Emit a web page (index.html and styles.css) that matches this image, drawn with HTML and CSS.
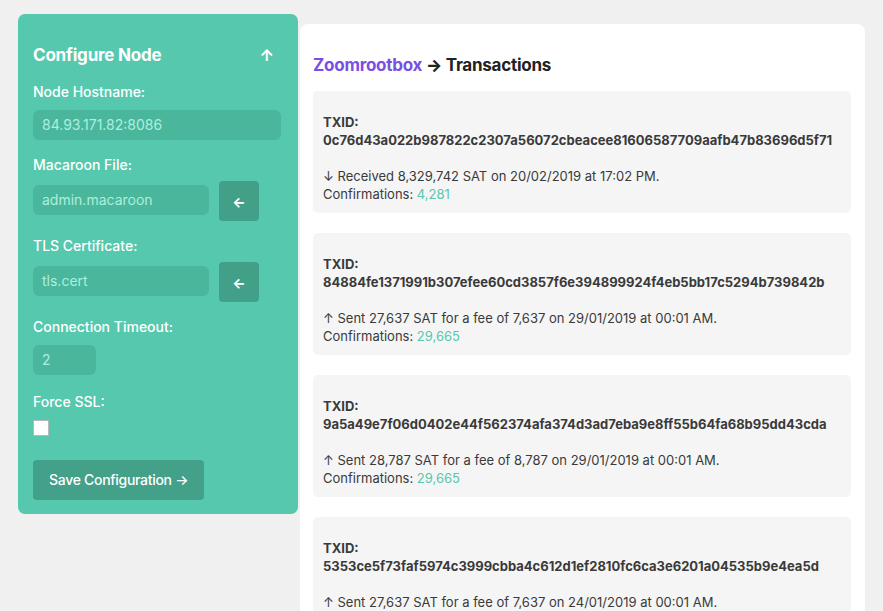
FILE: index.html
```html
<!DOCTYPE html>
<html>
<head>
<meta charset="utf-8">
<link rel="stylesheet" href="styles.css">
</head>
<body>
<div class="page">
  <aside class="config">
    <div class="config-head">
      <h2 class="config-title">Configure Node</h2>
      <span class="collapse">&#8593;</span>
    </div>
    <div class="field">
      <label class="label">Node Hostname:</label>
      <div class="input input-wide">84.93.171.82:8086</div>
    </div>
    <div class="field">
      <label class="label label-tight">Macaroon File:</label>
      <div class="row">
        <div class="input input-mid">admin.macaroon</div>
        <div class="icon-btn">&#8592;</div>
      </div>
    </div>
    <div class="field">
      <label class="label label-tight">TLS Certificate:</label>
      <div class="row">
        <div class="input input-mid">tls.cert</div>
        <div class="icon-btn">&#8592;</div>
      </div>
    </div>
    <div class="field field-loose">
      <label class="label">Connection Timeout:</label>
      <div class="input input-small">2</div>
    </div>
    <div class="field">
      <label class="label">Force SSL:</label>
      <div class="checkbox"></div>
    </div>
    <div class="save-btn">Save Configuration &#8594;</div>
  </aside>
  <main class="card">
    <h1 class="title"><span class="brand">Zoomrootbox</span> <span class="arrow">&#8594;</span> Transactions</h1>
    <div class="tx">
      <p class="txid">TXID:<br>0c76d43a022b987822c2307a56072cbeacee81606587709aafb47b83696d5f71</p>
      <p class="desc">&#8595; Received 8,329,742 SAT on 20/02/2019 at 17:02 PM.<br>Confirmations: <span class="conf">4,281</span></p>
    </div>
    <div class="tx">
      <p class="txid">TXID:<br>84884fe1371991b307efee60cd3857f6e394899924f4eb5bb17c5294b739842b</p>
      <p class="desc">&#8593; Sent 27,637 SAT for a fee of 7,637 on 29/01/2019 at 00:01 AM.<br>Confirmations: <span class="conf">29,665</span></p>
    </div>
    <div class="tx">
      <p class="txid">TXID:<br>9a5a49e7f06d0402e44f562374afa374d3ad7eba9e8ff55b64fa68b95dd43cda</p>
      <p class="desc">&#8593; Sent 28,787 SAT for a fee of 8,787 on 29/01/2019 at 00:01 AM.<br>Confirmations: <span class="conf">29,665</span></p>
    </div>
    <div class="tx">
      <p class="txid">TXID:<br>5353ce5f73faf5974c3999cbba4c612d1ef2810fc6ca3e6201a04535b9e4ea5d</p>
      <p class="desc">&#8593; Sent 27,637 SAT for a fee of 7,637 on 24/01/2019 at 00:01 AM.<br>Confirmations: <span class="conf">29,665</span></p>
    </div>
  </main>
</div>
</body>
</html>
```
FILE: styles.css
```css
html, body {
  margin: 0;
  padding: 0;
  background: #f0f0f0;
  font-family: Inter, "Noto Sans", sans-serif;
  overflow: hidden;
  height: 611px;
}

.page {
  display: flex;
  align-items: flex-start;
  gap: 2px;
  padding: 14px 0 0 18px;
}

.config {
  width: 280px;
  box-sizing: border-box;
  background: #56c8ae;
  border-radius: 7px;
  padding: 31px 15px 14px 15px;
  color: #fff;
}

.config-head {
  display: flex;
  justify-content: space-between;
  align-items: center;
  height: 20px;
  margin-bottom: 18px;
}

.config-title {
  margin: 0;
  font-size: 17px;
  font-weight: 700;
  line-height: 20px;
  letter-spacing: -0.2px;
}

.collapse {
  font-size: 16px;
  font-weight: 700;
  margin-right: 9px;
}

.field {
  margin-bottom: 16px;
}

.field-loose {
  margin-bottom: 18px;
}

.label {
  display: block;
  font-size: 14px;
  font-weight: 500;
  line-height: 18px;
  margin-bottom: 9px;
}

.label-tight {
  margin-bottom: 7px;
}

.input {
  box-sizing: border-box;
  height: 30px;
  line-height: 30px;
  padding-left: 9px;
  background: #4ab69c;
  border-radius: 6px;
  color: #acefdc;
  font-size: 14px;
}

.input-wide { width: 248px; }
.input-mid { width: 176px; margin-top: -2px; }
.input-small { width: 63px; }

.row {
  display: flex;
  align-items: center;
  gap: 10px;
}

.icon-btn {
  width: 40px;
  height: 40px;
  border-radius: 4px;
  background: #42a089;
  color: #fff;
  display: flex;
  align-items: center;
  justify-content: center;
  font-size: 14px;
  font-weight: 700;
}

.checkbox {
  width: 14px;
  height: 14px;
  background: #fff;
  border: 1px solid #b8b8b8;
  border-radius: 1px;
}

.save-btn {
  display: inline-block;
  margin-top: 8px;
  height: 40px;
  line-height: 40px;
  padding: 0 16px;
  background: #43a089;
  border-radius: 4px;
  font-size: 14px;
  font-weight: 500;
  letter-spacing: -0.3px;
}

.card {
  width: 565px;
  box-sizing: border-box;
  margin-top: 10px;
  background: #fff;
  border-radius: 8px;
  padding: 31px 14px 20px 13px;
  min-height: 700px;
}

.title {
  margin: 0 0 16px 0;
  font-size: 17px;
  font-weight: 700;
  line-height: 20px;
  color: #222;
  letter-spacing: -0.25px;
}

.arrow {
  font-weight: 800;
}

.brand {
  color: #7a4fe4;
}

.tx {
  background: #f5f5f5;
  border-radius: 5px;
  padding: 22px 10px 10px 10px;
  margin-bottom: 20px;
  color: #3a3a3a;
  font-size: 13px;
  line-height: 18px;
}

.tx p {
  margin: 0;
}

.txid {
  font-weight: 700;
  margin-bottom: 18px !important;
}

.conf {
  color: #56c8ae;
}
```
